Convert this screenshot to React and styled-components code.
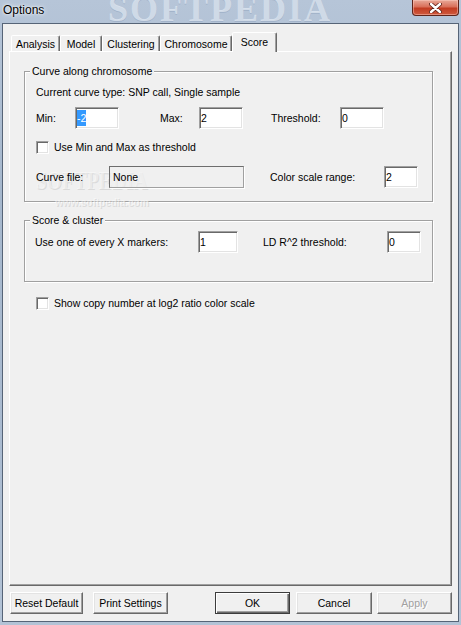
import React from 'react';
import styled, { createGlobalStyle } from 'styled-components';

const GlobalStyle = createGlobalStyle`
  html, body {
    margin: 0;
    padding: 0;
    background: #f0f0f0;
  }
  body {
    font-family: 'Liberation Sans', Arial, sans-serif;
    font-size: 10.5px;
    color: #000;
  }
`;

const Window = styled.div`
  width: 461px;
  height: 625px;
  box-sizing: border-box;
  display: flex;
  flex-direction: column;
  padding: 0 2px 3px 2px;
  overflow: hidden;
  background: linear-gradient(to bottom, #b6c5d8 0%, #a6b8cd 30%, #aabbd0 70%, #b3c3d6 100%);
`;

const TitleBar = styled.div`
  flex: none;
  height: 23px;
  display: flex;
  align-items: flex-start;
  position: relative;
  overflow: hidden;
`;

const TitleText = styled.div`
  position: relative;
  z-index: 1;
  padding-left: 1px;
  font-size: 12px;
  line-height: 20px;
  text-shadow: 0 0 5px rgba(255, 255, 255, 0.95), 0 0 2px rgba(255, 255, 255, 0.9);
`;

// the site stamp printed across the caption
const TitleWatermark = styled.div`
  position: absolute;
  left: 106px;
  top: -9px;
  font-family: 'Liberation Serif', serif;
  font-weight: bold;
  font-size: 36px;
  line-height: 36px;
  letter-spacing: 2px;
  color: rgba(238, 244, 251, 0.62);
  text-shadow: 0 1px 0 rgba(120, 140, 170, 0.3);
  pointer-events: none;
`;

const CloseButton = styled.div`
  position: relative;
  z-index: 1;
  margin-left: auto;
  width: 47px;
  height: 16px;
  box-sizing: border-box;
  display: flex;
  align-items: center;
  justify-content: center;
  border: 1px solid #5e241a;
  border-top: none;
  border-radius: 0 0 4px 4px;
  background: linear-gradient(to bottom, #e8a898 0%, #d9705a 45%, #c23c22 55%, #cf5a3e 100%);
  box-shadow: inset 0 0 0 1px rgba(255, 210, 200, 0.45);
`;

const Client = styled.div`
  flex: 1;
  display: flex;
  flex-direction: column;
  background: #f0f0f0;
  border: 1px solid #566477;
  padding: 8px 6px 7px 6px;
  min-height: 0;
`;

const TabStrip = styled.div`
  display: flex;
  align-items: flex-end;
  height: 19px;
  padding-left: 2px;
`;

const Tab = styled.div`
  box-sizing: border-box;
  width: ${p => p.$w}px;
  height: ${p => (p.$active ? 20 : 16)}px;
  margin-bottom: ${p => (p.$active ? -1 : 0)}px;
  position: relative;
  z-index: ${p => (p.$active ? 2 : 1)};
  padding-top: ${p => (p.$active ? 3 : 2)}px;
  text-align: center;
  line-height: 13px;
  background: #f0f0f0;
  border: 1px solid;
  border-bottom: none;
  border-color: #fff #696969 transparent #fff;
  border-radius: 2px 2px 0 0;
  box-shadow: inset -1px 0 0 #a0a0a0;
`;

const Panel = styled.div`
  flex: 1;
  position: relative;
  display: flex;
  flex-direction: column;
  align-items: stretch;
  border: 1px solid;
  border-color: #fff #696969 #696969 #fff;
  box-shadow: inset -1px -1px 0 #a0a0a0;
  padding: 19px 18px 0 14px;
  min-height: 0;
`;

const Group = styled.div`
  position: relative;
  display: flex;
  flex-direction: column;
  align-items: flex-start;
  margin-top: ${p => p.$mt || 0}px;
  padding: 0 0 ${p => p.$pb}px ${p => p.$pl}px;
  border: 1px solid #a0a0a0;
  box-shadow: 1px 1px 0 #fff, inset 1px 1px 0 #fff;
`;

const Legend = styled.div`
  position: relative;
  z-index: 1;
  margin: -7px 0 0 ${p => p.$ml}px;
  padding: 0 2px;
  line-height: 13px;
  background: #f0f0f0;
`;

const Line = styled.div`
  margin-top: ${p => p.$mt || 0}px;
  line-height: 13px;
`;

const Row = styled.div`
  display: flex;
  align-items: center;
  margin-top: ${p => p.$mt || 0}px;
  margin-left: ${p => p.$ml || 0}px;
`;

const Label = styled.div`
  position: relative;
  z-index: 1;
  flex: none;
  width: ${p => (p.$w ? `${p.$w}px` : 'auto')};
  margin-left: ${p => p.$ml || 0}px;
  line-height: 13px;
  white-space: nowrap;
`;

const Field = styled.div`
  position: relative;
  z-index: 1;
  flex: none;
  box-sizing: border-box;
  width: ${p => p.$w}px;
  height: 22px;
  display: flex;
  align-items: center;
  padding-left: ${p => (p.$static ? 3 : 1)}px;
  background: ${p => (p.$static ? 'rgba(240, 240, 240, 0.6)' : '#fff')};
  border: 1px solid;
  border-color: ${p => (p.$static ? '#6d6d6d #a0a0a0 #a0a0a0 #6d6d6d' : '#a0a0a0 #fff #fff #a0a0a0')};
  box-shadow: ${p => (p.$static ? '1px 1px 0 #fff' : 'inset 1px 1px 0 #696969, inset -1px -1px 0 #e3e3e3')};
  line-height: 13px;
`;

const Selected = styled.span`
  background: #3399ff;
  color: #fff;
  line-height: 16px;
`;

const CheckBox = styled.div`
  flex: none;
  box-sizing: border-box;
  width: 13px;
  height: 13px;
  background: #fff;
  border: 1px solid;
  border-color: #a0a0a0 #fff #fff #a0a0a0;
  box-shadow: inset 1px 1px 0 #696969, inset -1px -1px 0 #e3e3e3;
  margin-right: 5px;
`;

// faint site stamp lying behind the curve file row
const PanelWatermark = styled.div`
  position: absolute;
  z-index: 0;
  left: ${p => p.$x}px;
  top: ${p => p.$y}px;
  font-family: ${p => (p.$serif ? "'Liberation Serif', serif" : "'Liberation Sans', Arial, sans-serif")};
  font-weight: bold;
  font-size: ${p => p.$size}px;
  line-height: 1;
  color: rgba(255, 255, 255, 0.45);
  text-shadow: 1px 1px 0 rgba(200, 200, 200, 0.55);
  transform-origin: left top;
  transform: ${p => (p.$narrow ? 'scaleX(0.78)' : 'none')};
  pointer-events: none;
`;

const ButtonRow = styled.div`
  display: flex;
  margin-top: 6px;
`;

const Button = styled.div`
  flex: none;
  box-sizing: border-box;
  width: ${p => p.$w}px;
  height: 22px;
  margin-left: ${p => p.$ml}px;
  display: flex;
  align-items: center;
  justify-content: center;
  background: #f0f0f0;
  border: 1px solid;
  border-color: ${p => (p.$default ? '#3c3c3c' : '#fff #696969 #696969 #fff')};
  box-shadow: ${p =>
    p.$default
      ? 'inset 1px 1px 0 #fff, inset -1px -1px 0 #696969, inset -2px -2px 0 #a0a0a0'
      : 'inset -1px -1px 0 #a0a0a0, inset 1px 1px 0 #e3e3e3'};
  color: ${p => (p.$disabled ? '#a0a0a0' : '#000')};
  text-shadow: ${p => (p.$disabled ? '1px 1px 0 #fff' : 'none')};
  line-height: 13px;
`;

const tabs = [
  { name: 'Analysis', w: 49 },
  { name: 'Model', w: 42 },
  { name: 'Clustering', w: 58 },
  { name: 'Chromosome', w: 72 },
  { name: 'Score', w: 45, active: true },
];

export default function App() {
  return (
    <>
      <GlobalStyle />
      <Window>
        <TitleBar>
          <TitleWatermark>SOFTPEDIA</TitleWatermark>
          <TitleText>Options</TitleText>
          <CloseButton>
            <svg width="13" height="10" viewBox="0 0 13 10">
              <path d="M2 1 L11 9 M11 1 L2 9" stroke="#5a1c12" strokeWidth="4" strokeLinecap="round" />
              <path d="M2 1 L11 9 M11 1 L2 9" stroke="#fff" strokeWidth="2.4" strokeLinecap="round" />
            </svg>
          </CloseButton>
        </TitleBar>
        <Client>
          <TabStrip>
            {tabs.map(t => (
              <Tab key={t.name} $w={t.w} $active={t.active}>
                {t.name}
              </Tab>
            ))}
          </TabStrip>
          <Panel>
            <Group $pl={11} $pb={13}>
              <PanelWatermark $x={11} $y={96} $size={25} $serif $narrow>SOFTPEDIA</PanelWatermark>
              <PanelWatermark $x={30} $y={126} $size={10}>www.softpedia.com</PanelWatermark>
              <Legend $ml={-6}>Curve along chromosome</Legend>
              <Line $mt={8}>Current curve type: SNP call, Single sample</Line>
              <Row $mt={8}>
                <Label $w={39}>Min:</Label>
                <Field $w={44}>
                  <Selected>-2</Selected>
                </Field>
                <Label $w={39} $ml={41}>Max:</Label>
                <Field $w={44}>2</Field>
                <Label $w={69} $ml={28}>Threshold:</Label>
                <Field $w={44}>0</Field>
              </Row>
              <Row $mt={12}>
                <CheckBox />
                <Label>Use Min and Max as threshold</Label>
              </Row>
              <Row $mt={12}>
                <Label $w={73}>Curve file:</Label>
                <Field $w={135} $static>None</Field>
                <Label $w={114} $ml={26}>Color scale range:</Label>
                <Field $w={34}>2</Field>
              </Row>
            </Group>
            <Group $mt={18} $pl={10} $pb={28}>
              <Legend $ml={-5}>Score &amp; cluster</Legend>
              <Row $mt={4}>
                <Label $w={163}>Use one of every X markers:</Label>
                <Field $w={40}>1</Field>
                <Label $w={124} $ml={25}>LD R^2 threshold:</Label>
                <Field $w={34}>0</Field>
              </Row>
            </Group>
            <Row $mt={15} $ml={12}>
              <CheckBox />
              <Label>Show copy number at log2 ratio color scale</Label>
            </Row>
          </Panel>
          <ButtonRow>
            <Button $w={73} $ml={1}>Reset Default</Button>
            <Button $w={75} $ml={10}>Print Settings</Button>
            <Button $w={75} $ml={47} $default>OK</Button>
            <Button $w={76} $ml={6}>Cancel</Button>
            <Button $w={75} $ml={5} $disabled>Apply</Button>
          </ButtonRow>
        </Client>
      </Window>
    </>
  );
}
